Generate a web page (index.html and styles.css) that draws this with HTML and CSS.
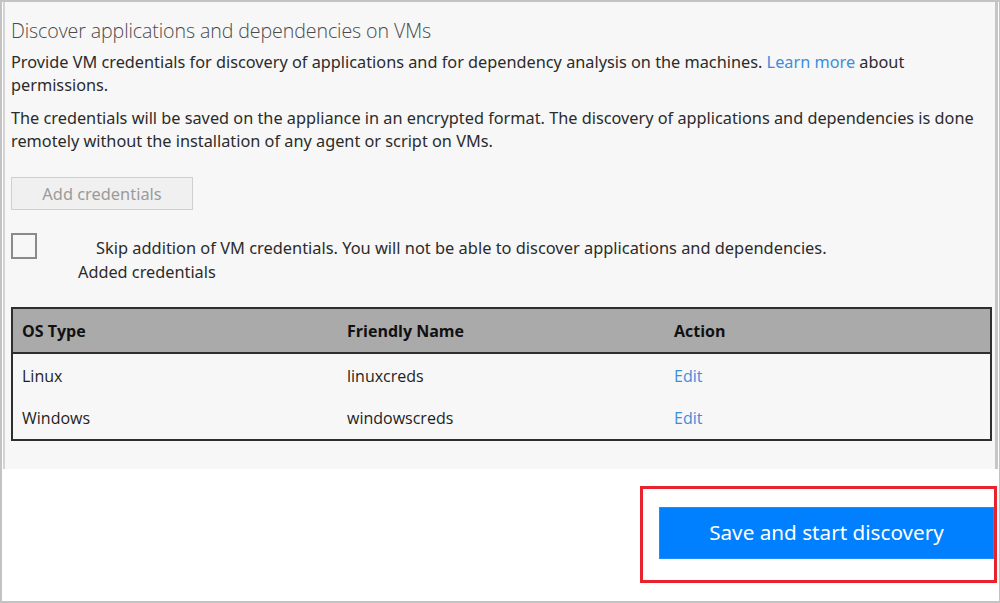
FILE: index.html
```html
<!DOCTYPE html>
<html>
<head>
<meta charset="utf-8">
<link rel="stylesheet" href="styles.css">
</head>
<body>
<div class="frame">
  <section class="panel">
    <h1 class="title">Discover applications and dependencies on VMs</h1>
    <p class="para">Provide VM credentials for discovery of applications and for dependency analysis on the machines. <a class="link">Learn more</a> about<br>permissions.</p>
    <p class="para">The credentials will be saved on the appliance in an encrypted format. The discovery of applications and dependencies is done remotely without the installation of any agent or script on VMs.</p>
    <button class="add-btn">Add credentials</button>
    <div class="skip-row">
      <span class="checkbox"></span>
      <span class="skip-text">Skip addition of VM credentials. You will not be able to discover applications and dependencies.</span>
    </div>
    <div class="added-label">Added credentials</div>
    <table class="creds">
      <thead>
        <tr><th class="c1">OS Type</th><th class="c2">Friendly Name</th><th class="c3">Action</th></tr>
      </thead>
      <tbody>
        <tr class="r1"><td>Linux</td><td>linuxcreds</td><td><a class="link">Edit</a></td></tr>
        <tr class="r2"><td>Windows</td><td>windowscreds</td><td><a class="link">Edit</a></td></tr>
      </tbody>
    </table>
  </section>
  <div class="footer">
    <div class="highlight">
      <button class="primary">Save and start discovery</button>
    </div>
  </div>
</div>
</body>
</html>
```

FILE: styles.css
```css
* { box-sizing: border-box; }
html, body { margin: 0; padding: 0; background: #fff; }
body { width: 1000px; height: 603px; overflow: hidden; font-family: "Noto Sans", "Open Sans", sans-serif; color: #2b2b2b; }

.frame {
  width: 1000px;
  height: 603px;
  border: 2px solid #c3c3c3;
  border-right: 1px solid #c3c3c3;
  background: #fff;
}

.panel {
  margin-left: 1px;
  width: 995px;
  height: 467px;
  background: #f7f7f7;
  border-left: 2px solid #d4d4d4;
  border-right: 3px solid #c6c6c6;
  padding: 16px 0 0 6px;
}

.title {
  margin: 0 0 7px;
  font-family: "Open Sans", sans-serif;
  font-weight: 300;
  font-size: 19.6px;
  line-height: 26px;
  color: #4a4a4a;
  letter-spacing: -0.1px;
}

.para {
  margin: 0 0 10px;
  font-size: 16.3px;
  line-height: 23px;
  color: #2b2b2b;
  width: 978px;
}

.link { color: #3d8ddb; text-decoration: none; }

.add-btn {
  display: block;
  margin-top: 24px;
  width: 182px;
  height: 33px;
  background: #f0f0f0;
  border: 1px solid #cfcfcf;
  color: #9a9a9a;
  font-family: "Noto Sans", sans-serif;
  font-size: 16.4px;
  padding: 0;
}

.skip-row {
  display: flex;
  align-items: flex-start;
  margin-top: 23px;
  height: 26px;
}

.checkbox {
  width: 26px;
  height: 26px;
  border: 2px solid #8a8a8a;
  background: #f7f7f7;
  flex: none;
}

.skip-text {
  margin-left: 59px;
  margin-top: 4px;
  font-size: 16.4px;
  line-height: 22px;
  color: #2b2b2b;
}

.added-label {
  margin-left: 67px;
  margin-top: 2px;
  font-size: 16.3px;
  line-height: 22px;
  color: #2b2b2b;
}

.creds {
  margin-top: 24px;
  width: 981px;
  border-collapse: collapse;
  border: 2px solid #2e2e2e;
  font-family: "Open Sans", sans-serif;
  font-size: 16px;
  color: #1e1e1e;
}

.creds thead tr { background: #aaaaaa; border-bottom: 2px solid #2e2e2e; }
.creds th {
  text-align: left;
  font-weight: 700;
  font-size: 16px;
  height: 45px;
  padding: 0 0 0 9px;
  color: #111;
}
.creds td {
  padding: 0 0 0 9px;
  font-size: 16px;
}
.r1 td { height: 44px; }
.r2 td { height: 43px; }
.c1 { width: 326px; }
.c2 { width: 327px; }

.footer {
  display: flex;
  justify-content: flex-end;
  padding-top: 17px;
  padding-right: 2px;
}

.highlight {
  width: 357px;
  height: 97px;
  border: 3px solid #e8232e;
  padding: 18px 0 0 16px;
}

.primary {
  display: block;
  width: 335px;
  height: 52px;
  background: #0080ff;
  border: 1px solid #1f8cff;
  color: #fff;
  font-family: "Noto Sans", sans-serif;
  font-size: 20.7px;
  padding: 0 0 2px;
}
```
